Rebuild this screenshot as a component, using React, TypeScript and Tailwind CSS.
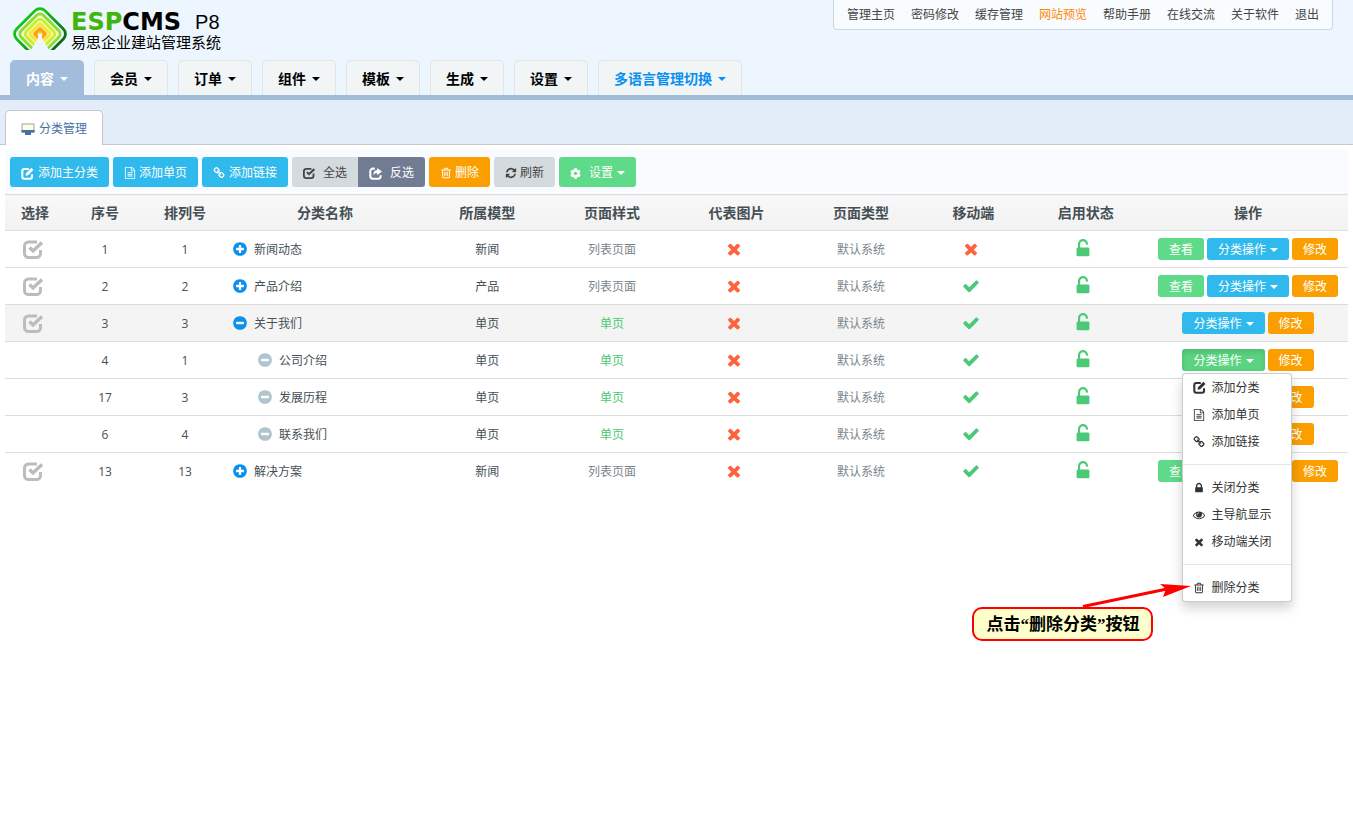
import React from "react";
import { FaCog } from "react-icons/fa";

const CIRCLE =
  "m320-64q0 209-103 385.5t-279.5 279.5-385.5 103-385.5-103-279.5-279.5-103-385.5 103-385.5 279.5-279.5 385.5-103 385.5 103 279.5 279.5 103 385.5z";

const icons = {
  check:
    "M1671 566q0 40-28 68l-724 724-136 136q-28 28-68 28t-68-28l-136-136-362-362q-28-28-28-68t28-68l136-136q28-28 68-28t68 28l294 295 656-657q28-28 68-28t68 28l136 136q28 28 28 68z",
  times:
    "M1490 1322q0 40-28 68l-136 136q-28 28-68 28t-68-28l-294-294-294 294q-28 28-68 28t-68-28l-136-136q-28-28-28-68t28-68l294-294-294-294q-28-28-28-68t28-68l136-136q28-28 68-28t68 28l294 294 294-294q28-28 68-28t68 28l136 136q28 28 28 68t-28 68l-294 294 294 294q28 28 28 68z",
  plus:
    "M1344 960v-128q0-26-19-45t-45-19h-256v-256q0-26-19-45t-45-19h-128q-26 0-45 19t-19 45v256h-256q-26 0-45 19t-19 45v128q0 26 19 45t45 19h256v256q0 26 19 45t45 19h128q26 0 45-19t19-45v-256h256q26 0 45-19t19-45z" +
    CIRCLE,
  minus:
    "M1344 960v-128q0-26-19-45t-45-19h-768q-26 0-45 19t-19 45v128q0 26 19 45t45 19h768q26 0 45-19t19-45z" +
    CIRCLE,
  trash:
    "M704 736v576q0 14-9 23t-23 9h-64q-14 0-23-9t-9-23v-576q0-14 9-23t23-9h64q14 0 23 9t9 23zm256 0v576q0 14-9 23t-23 9h-64q-14 0-23-9t-9-23v-576q0-14 9-23t23-9h64q14 0 23 9t9 23zm256 0v576q0 14-9 23t-23 9h-64q-14 0-23-9t-9-23v-576q0-14 9-23t23-9h64q14 0 23 9t9 23zm128 724v-948h-896v948q0 22 7 40.5t14.5 27 10.5 8.5h832q3 0 10.5-8.5t14.5-27 7-40.5zm-672-1076h448l-48-117q-7-9-17-11h-317q-10 2-17 11zm928 32v64q0 14-9 23t-23 9h-96v948q0 83-47 143.5t-113 60.5h-832q-66 0-113-58.5t-47-141.5v-952h-96q-14 0-23-9t-9-23v-64q0-14 9-23t23-9h309l70-167q15-37 54-63t79-26h320q40 0 79 26t54 63l70 167h309q14 0 23 9t9 23z",
  file:
    "M1596 380q28 28 48 76t20 88v1152q0 40-28 68t-68 28h-1344q-40 0-68-28t-28-68v-1600q0-40 28-68t68-28h896q40 0 88 20t76 48zm-444-244v376h376q-10-29-22-41l-313-313q-12-12-41-22zm384 1528v-1024h-416q-40 0-68-28t-28-68v-416h-768v1536h1280zm-1024-864q0-14 9-23t23-9h704q14 0 23 9t9 23v64q0 14-9 23t-23 9h-704q-14 0-23-9t-9-23v-64zm736 224q14 0 23 9t9 23v64q0 14-9 23t-23 9h-704q-14 0-23-9t-9-23v-64q0-14 9-23t23-9h704zm0 256q14 0 23 9t9 23v64q0 14-9 23t-23 9h-704q-14 0-23-9t-9-23v-64q0-14 9-23t23-9h704z",
  unlock:
    "M1376 768q40 0 68 28t28 68v576q0 40-28 68t-68 28h-960q-40 0-68-28t-28-68v-576q0-40 28-68t68-28h32v-320q0-185 131.5-316.5t316.5-131.5 316.5 131.5 131.5 316.5q0 26-19 45t-45 19h-64q-26 0-45-19t-19-45q0-106-75-181t-181-75-181 75-75 181v320h736z",
  lock:
    "M640 768h512v-192q0-106-75-181t-181-75-181 75-75 181v192zm832 96v576q0 40-28 68t-68 28h-960q-40 0-68-28t-28-68v-576q0-40 28-68t68-28h32v-192q0-184 132-316t316-132 316 132 132 316v192h32q40 0 68 28t28 68z",
  link:
    "M1520 1216q0-40-28-68l-208-208q-28-28-68-28-42 0-72 32 3 3 19 18.5t21.5 21.5 15 19 13 25.5 3.5 27.5q0 40-28 68t-68 28q-15 0-27.5-3.5t-25.5-13-19-15-21.5-21.5-18.5-19q-33 31-33 73 0 40 28 68l206 207q27 27 68 27 40 0 68-26l147-146q28-28 28-67zm-703-705q0-40-28-68l-206-207q-28-28-68-28-39 0-68 27l-147 146q-28 28-28 67 0 40 28 68l208 208q27 27 68 27 42 0 72-31-3-3-19-18.5t-21.5-21.5-15-19-13-25.5-3.5-27.5q0-40 28-68t68-28q15 0 27.5 3.5t25.5 13 19 15 21.5 21.5 18.5 19q33-31 33-73zm895 705q0 120-85 203l-147 146q-83 83-203 83-121 0-204-85l-206-207q-83-83-83-203 0-123 88-209l-88-88q-86 88-208 88-120 0-204-84l-208-208q-84-84-84-204t85-203l147-146q83-83 203-83 121 0 204 85l206 207q83 83 83 203 0 123-88 209l88 88q86-88 208-88 120 0 204 84l208 208q84 84 84 204z",
  refresh:
    "M1639 1056q0 5-1 7-64 268-268 434.5t-478 166.5q-146 0-282.5-55t-243.5-157l-129 129q-19 19-45 19t-45-19-19-45v-448q0-26 19-45t45-19h448q26 0 45 19t19 45-19 45l-137 137q71 66 161 102t187 36q134 0 250-65t186-179q11-17 53-117 8-23 30-23h192q13 0 22.5 9.5t9.5 22.5zm25-800v448q0 26-19 45t-45 19h-448q-26 0-45-19t-19-45 19-45l138-138q-148-137-349-137-134 0-250 65t-186 179q-11 17-53 117-8 23-30 23h-199q-13 0-22.5-9.5t-9.5-22.5v-7q65-268 270-434.5t480-166.5q146 0 284 55.5t245 156.5l130-129q19-19 45-19t45 19 19 45z",
  eye:
    "M1664 960q-152-236-381-353 61 104 61 225 0 185-131.5 316.5t-316.5 131.5-316.5-131.5-131.5-316.5q0-121 61-225-229 117-381 353 133 205 333.5 326.5t434.5 121.5 434.5-121.5 333.5-326.5zm-720-384q0-20-14-34t-34-14q-125 0-214.5 89.5t-89.5 214.5q0 20 14 34t34 14 34-14 14-34q0-86 61-147t147-61q20 0 34-14t14-34zm848 384q0 34-20 69-140 230-376.5 368.5t-499.5 138.5-499.5-139-376.5-368q-20-35-20-69t20-69q140-229 376.5-368t499.5-139 499.5 139 376.5 368q20 35 20 69z",
};

/* Icons that share the heavy, open-cornered square frame (20 x 20 grid). */
const framed = {
  checkSquare: (
    <>
      <path d="M14 3H5.500a4 4 0 0 0-4 4v7.500a4 4 0 0 0 4 4h8a4 4 0 0 0 4-4V11" fill="none" stroke="currentColor" strokeWidth="3" />
      <path d="M6.500 8.500l3.500 3.500L19 3.500" fill="none" stroke="currentColor" strokeWidth="3.4" />
    </>
  ),
  edit: (
    <>
      <path d="M12 3H5a3 3 0 0 0-3 3v9a3 3 0 0 0 3 3h9a3 3 0 0 0 3-3v-4" fill="none" stroke="currentColor" strokeWidth="3.2" />
      <path d="M7 13.500l.8-4L16 1.300l3.200 3.200L11 12.700z" fill="currentColor" />
    </>
  ),
  share: (
    <>
      <path d="M9 2.500H6a4 4 0 0 0-4 4V14a4 4 0 0 0 4 4h8a4 4 0 0 0 4-4v-1.500" fill="none" stroke="currentColor" strokeWidth="3.2" />
      <path d="M12.500 1.500L20 7l-7.500 5.500V9.300C9.500 9.300 8 10.500 6.800 13c-.6-5 1.700-8 5.700-8.200z" fill="currentColor" />
    </>
  ),
};

type IconName = keyof typeof icons | keyof typeof framed;

function Icon({ name, className = "size-[14px]" }: { name: IconName; className?: string }) {
  if (name in framed) {
    return (
      <svg viewBox="0 0 20 20" aria-hidden="true" className={`shrink-0 ${className}`}>
        {framed[name as keyof typeof framed]}
      </svg>
    );
  }
  return (
    <svg viewBox="0 0 1792 1792" fill="currentColor" aria-hidden="true" className={`shrink-0 ${className}`}>
      <path d={icons[name as keyof typeof icons]} />
    </svg>
  );
}

function Caret() {
  return (
    <svg viewBox="0 0 8 4" fill="currentColor" aria-hidden="true" className="h-1 w-2 shrink-0">
      <path d="M0 0h8L4 4z" />
    </svg>
  );
}

function LogoMark() {
  const rings = [
    { half: 29.6, r: 7, stroke: "url(#ring)" },
    { half: 23.4, r: 5, stroke: "#8fdc2c" },
    { half: 17.6, r: 4, stroke: "#c3ef35" },
    { half: 12, r: 2, stroke: "#f6e63a" },
    { half: 6.4, r: 1, stroke: "#f5a21a" },
  ];
  return (
    <svg viewBox="0 0 54 46" className="h-[46px] w-[54px] shrink-0" aria-hidden="true">
      <defs>
        <linearGradient id="ring" gradientUnits="userSpaceOnUse" x1="-20" y1="0" x2="20" y2="0">
          <stop offset="0.2" stopColor="#12c312" />
          <stop offset="1" stopColor="#0b6b1c" />
        </linearGradient>
        <clipPath id="cut">
          <path d="M0 0h54v44H36l-7-12v-4h-4v4l-7 12H0z" />
        </clipPath>
      </defs>
      <g clipPath="url(#cut)">
        <g transform="translate(27 28) rotate(45)">
          <rect x="-14" y="-14" width="28" height="28" rx="5" fill="#f4fbb0" />
          <rect x="-6" y="-6" width="12" height="12" rx="2" fill="#fbd54a" />
          {rings.map((g) => {
            const a = g.half / Math.SQRT2 - 0.9;
            return (
              <rect key={g.half} x={-a} y={-a} width={2 * a} height={2 * a} rx={g.r} fill="none" stroke={g.stroke} strokeWidth="2.8" />
            );
          })}
        </g>
      </g>
    </svg>
  );
}

const topLinks = ["管理主页", "密码修改", "缓存管理", "网站预览", "帮助手册", "在线交流", "关于软件", "退出"];
const navItems = ["内容", "会员", "订单", "组件", "模板", "生成", "设置", "多语言管理切换"];

function navClass(label: string) {
  if (label === "内容") return "border-[#a2bddb] bg-[#a2bddb] text-white";
  if (label === "多语言管理切换") return "border-[#e0e5e5] bg-[#f1f5f5] text-[#0b8ff0]";
  return "border-[#e0e5e5] bg-[#f1f5f5] text-black";
}

type Row = {
  id: number;
  order: number;
  name: string;
  model: string;
  style: string;
  mobile: boolean;
  child?: boolean;
  open?: boolean;
};

const rows: Row[] = [
  { id: 1, order: 1, name: "新闻动态", model: "新闻", style: "列表页面", mobile: false },
  { id: 2, order: 2, name: "产品介绍", model: "产品", style: "列表页面", mobile: true },
  { id: 3, order: 3, name: "关于我们", model: "单页", style: "单页", mobile: true, open: true },
  { id: 4, order: 1, name: "公司介绍", model: "单页", style: "单页", mobile: true, child: true },
  { id: 17, order: 3, name: "发展历程", model: "单页", style: "单页", mobile: true, child: true },
  { id: 6, order: 4, name: "联系我们", model: "单页", style: "单页", mobile: true, child: true },
  { id: 13, order: 13, name: "解决方案", model: "新闻", style: "列表页面", mobile: true },
];

const MENU_ROW = 4;

const menuGroups: { icon: IconName; label: string; size: string }[][] = [
  [
    { icon: "edit", label: "添加分类", size: "size-[13px]" },
    { icon: "file", label: "添加单页", size: "size-[12px]" },
    { icon: "link", label: "添加链接", size: "size-[12px]" },
  ],
  [
    { icon: "lock", label: "关闭分类", size: "size-[12px]" },
    { icon: "eye", label: "主导航显示", size: "size-[12px]" },
    { icon: "times", label: "移动端关闭", size: "size-[12px]" },
  ],
  [{ icon: "trash", label: "删除分类", size: "size-[12px]" }],
];

function ActionMenu() {
  return (
    <div
      role="menu"
      className="absolute top-full left-0 z-10 mt-0.5 w-[110px] rounded-[4px] border border-black/20 bg-white text-left shadow-[0_6px_12px_rgba(0,0,0,0.18)]"
    >
      {menuGroups.map((group, i) => (
        <div key={i} className={i > 0 ? "mt-[9px] border-t border-[#e5e5e5] pt-[9px]" : ""}>
          {group.map((item) => (
            <button
              key={item.label}
              type="button"
              role="menuitem"
              className="flex h-[27px] w-full items-center gap-1 pl-[10px] text-xs whitespace-nowrap text-[#333]"
            >
              <span className="flex w-[14px] shrink-0 items-center">
                <Icon name={item.icon} className={item.size} />
              </span>
              {item.label}
            </button>
          ))}
        </div>
      ))}
      <Callout />
    </div>
  );
}

function Callout() {
  return (
    <div className="absolute top-full right-full mt-[6px] mr-[30px]">
      <svg viewBox="0 0 112 24" aria-hidden="true" className="absolute right-[-38px] bottom-full h-6 w-[112px]">
        <path d="M4 23.500L88 6" stroke="#f00" strokeWidth="3" fill="none" />
        <path d="M112 3L81 1l6 5-3 8z" fill="#f00" />
      </svg>
      <div className="relative rounded-[10px] border-2 border-[#f00] bg-[#ffffcc] px-3 pt-1 pb-0.5 font-['Liberation_Serif','Noto_Sans_CJK_SC',serif] text-[17px] leading-6 font-bold whitespace-nowrap text-black">
        点击“删除分类”按钮
      </div>
    </div>
  );
}

const smallButton = "flex h-[22px] items-center rounded-[3px] pt-0.5 text-xs whitespace-nowrap text-white";

function Actions({ row }: { row: Row }) {
  const active = row.id === MENU_ROW;
  const full = row.style === "列表页面";
  return (
    <div className="flex items-center justify-center gap-[3px]">
      {full && (
        <button type="button" className={`${smallButton} bg-[#5fda88] px-[11px]`}>
          查看
        </button>
      )}
      <div className="relative">
        <button
          type="button"
          aria-haspopup="menu"
          aria-expanded={active}
          className={`${smallButton} gap-1 px-[11px] ${active ? "bg-[#5bd381] shadow-[inset_0_3px_5px_rgba(0,0,0,0.125)]" : "bg-[#2fb9ec]"}`}
        >
          分类操作
          <Caret />
        </button>
        {active && <ActionMenu />}
      </div>
      <button type="button" className={`${smallButton} bg-[#fb9f00] px-[11px]`}>
        修改
      </button>
    </div>
  );
}

const toolButton = "flex h-[30px] items-center px-[11px] pt-0.5 text-xs whitespace-nowrap";

const columns = [
  { label: "选择", width: "w-[60px]" },
  { label: "序号", width: "w-20" },
  { label: "排列号", width: "w-20" },
  { label: "分类名称", width: "w-[200px]" },
  { label: "所属模型", width: "" },
  { label: "页面样式", width: "" },
  { label: "代表图片", width: "" },
  { label: "页面类型", width: "" },
  { label: "移动端", width: "w-[100px]" },
  { label: "启用状态", width: "" },
  { label: "操作", width: "w-[200px]" },
];

export default function App() {
  return (
    <div className="min-h-screen bg-white font-['Open_Sans','Noto_Sans_CJK_SC',sans-serif] text-xs text-[#454f54]">
      <header className="border-b-[5px] border-[#a2bddb] bg-[#edf6fe]">
        <div className="flex h-[60px] items-start justify-between pr-5 pl-[13px]">
          <a href="#home" className="flex items-start gap-1 pt-[6px] text-black" aria-label="ESPCMS P8 易思企业建站管理系统">
            <LogoMark />
            <span className="flex flex-col pt-[6px]">
              <span className="flex items-center gap-[14px] leading-5">
                <span className="font-['DejaVu_Sans',sans-serif] text-[24px] leading-5 font-bold">
                  <span className="text-[#41b50b]">ESP</span>CMS
                </span>
                <span className="font-['Liberation_Sans',sans-serif] text-xl leading-5">P8</span>
              </span>
              <span className="text-[15px] leading-5">易思企业建站管理系统</span>
            </span>
          </a>
          <nav className="flex h-[30px] items-center gap-4 rounded-b-[4px] border border-t-0 border-[#c8d8e6] bg-[#f8fcff] px-[13px] text-[#444]">
            {topLinks.map((label) => (
              <a key={label} href="#top" className={label === "网站预览" ? "text-[#ff8800]" : ""}>
                {label}
              </a>
            ))}
          </nav>
        </div>
        <nav className="flex gap-[10px] pl-[10px]">
          {navItems.map((label) => (
            <button
              key={label}
              type="button"
              className={`flex h-[35px] items-center gap-[6px] rounded-t-[5px] border border-b-0 px-[15px] pt-0.5 text-sm font-bold whitespace-nowrap ${navClass(label)}`}
            >
              {label}
              <Caret />
            </button>
          ))}
        </nav>
      </header>

      <div className="flex h-[45px] items-end border-b border-[#c5c9cd] bg-[#e3edf9] pl-[5px]">
        <a
          href="#category"
          className="-mb-px flex h-[35px] items-center gap-1 rounded-t-[5px] border border-b-0 border-[#c5c9cd] bg-white px-[15px] pt-0.5 text-[#44719f]"
        >
          <svg viewBox="0 0 14 12" aria-hidden="true" className="h-3 w-[14px]">
            <rect x="1" y="1" width="12" height="8" fill="#fffbe8" stroke="#8fae9f" strokeWidth="1" />
            <path d="M0.5 7h13v2.500h-13zM4 9.500h6V12H4z" fill="#44719f" />
          </svg>
          分类管理
        </a>
      </div>

      <main className="px-[5px] pt-[5px]">
        <div className="flex items-center gap-1 bg-[#f8fbff] px-[5px] py-[7px] text-white">
          <button type="button" className={`${toolButton} gap-1 rounded-[3px] bg-[#2fb9ec]`}>
            <Icon name="edit" className="size-[13px]" />
            添加主分类
          </button>
          <button type="button" className={`${toolButton} gap-[3px] rounded-[3px] bg-[#2fb9ec]`}>
            <Icon name="file" className="size-[12px]" />
            添加单页
          </button>
          <button type="button" className={`${toolButton} gap-1 rounded-[3px] bg-[#2fb9ec]`}>
            <Icon name="link" className="size-[12px]" />
            添加链接
          </button>
          <div className="flex">
            <button type="button" className={`${toolButton} gap-2 rounded-l-[3px] bg-[#d3dbde] text-[#444]`}>
              <Icon name="checkSquare" className="size-[12px]" />
              全选
            </button>
            <button type="button" className={`${toolButton} gap-2 rounded-r-[3px] bg-[#717c92]`}>
              <Icon name="share" className="size-[13px]" />
              反选
            </button>
          </div>
          <button type="button" className={`${toolButton} gap-[3px] rounded-[3px] bg-[#fb9f00]`}>
            <Icon name="trash" className="size-[12px]" />
            删除
          </button>
          <button type="button" className={`${toolButton} gap-[3px] rounded-[3px] bg-[#d3dbde] text-[#444]`}>
            <Icon name="refresh" className="size-[12px]" />
            刷新
          </button>
          <button type="button" className={`${toolButton} gap-1 rounded-[3px] bg-[#5fda88]`}>
            <FaCog aria-hidden="true" className="mr-1 size-[11px]" />
            设置
            <Caret />
          </button>
        </div>

        <table className="w-full table-fixed border-collapse text-center">
          <thead>
            <tr className="h-9 border-y border-[#dddddd] bg-linear-to-b from-[#f8f8f8] to-[#f2f2f2]">
              {columns.map((c) => (
                <th key={c.label} scope="col" className={`p-0 text-sm font-bold ${c.width}`}>
                  {c.label}
                </th>
              ))}
            </tr>
          </thead>
          <tbody>
            {rows.map((row) => (
              <tr
                key={row.id}
                className={`h-[37px] border-b border-[#dddddd] last:border-b-0 ${row.open ? "bg-[#f4f4f4]" : ""}`}
              >
                <td className="p-0">
                  {!row.child && (
                    <label className="flex justify-center pr-1 text-[#bcbcbc]">
                      <input type="checkbox" className="sr-only" aria-label={`选择 ${row.name}`} />
                      <Icon name="checkSquare" className="size-5" />
                    </label>
                  )}
                </td>
                <td className="p-0 pt-0.5">{row.id}</td>
                <td className="p-0 pt-0.5">{row.order}</td>
                <td className="p-0">
                  <div className={`flex items-center gap-[6px] ${row.child ? "pl-8" : "pl-[7px]"}`}>
                    <button
                      type="button"
                      aria-label={row.open || row.child ? "收起" : "展开"}
                      className={row.child ? "text-[#b0c4cd]" : "text-[#0b90ee]"}
                    >
                      <Icon name={row.open || row.child ? "minus" : "plus"} className="size-4" />
                    </button>
                    <span className="pt-0.5">{row.name}</span>
                  </div>
                </td>
                <td className="p-0 pt-0.5">{row.model}</td>
                <td className={`p-0 pt-0.5 ${row.style === "单页" ? "text-[#4bc972]" : "text-[#7b868c]"}`}>{row.style}</td>
                <td className="p-0">
                  <div className="flex justify-center pr-1 text-[#fd633c]">
                    <Icon name="times" className="size-[18px]" />
                  </div>
                </td>
                <td className="p-0 pt-0.5 text-[#7b868c]">默认系统</td>
                <td className="p-0">
                  <div className={`flex justify-center pr-1 ${row.mobile ? "text-[#4cc976]" : "text-[#fd633c]"}`}>
                    <Icon name={row.mobile ? "check" : "times"} className="size-[18px]" />
                  </div>
                </td>
                <td className="p-0">
                  <div className="flex justify-center pr-[6px] text-[#4cc976]">
                    <Icon name="unlock" className="size-5" />
                  </div>
                </td>
                <td className="p-0">
                  <Actions row={row} />
                </td>
              </tr>
            ))}
          </tbody>
        </table>
      </main>
    </div>
  );
}
